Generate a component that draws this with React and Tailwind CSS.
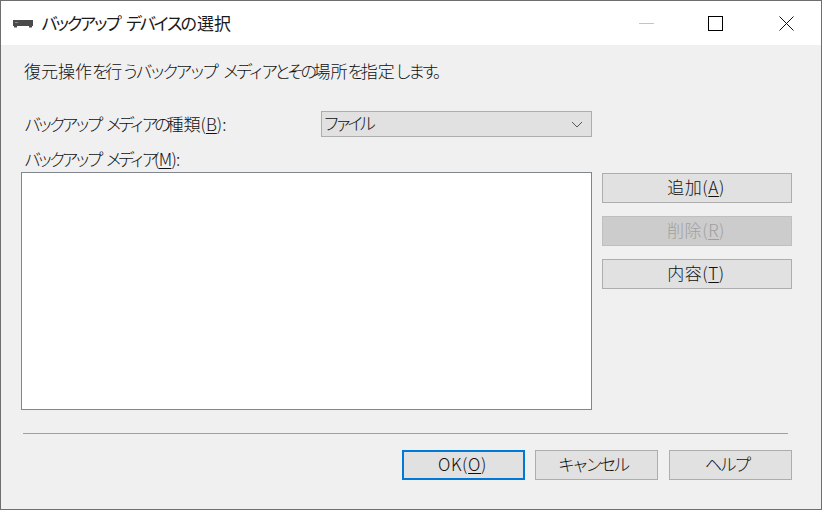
function Key({ children }) {
  return <span className="underline underline-offset-2 decoration-1">{children}</span>;
}

// katakana and hiragana are set much narrower than kanji in the dialog font
function Kana({ children, className = "tracking-[-4.5px]" }) {
  return <span className={className}>{children}</span>;
}

function Btn({ children, disabled, focus, className = "" }) {
  let look = "border-[#adadad] bg-[#e1e1e1] text-[#111]";
  if (disabled) look = "border-[#bfbfbf] bg-[#cccccc] text-[#a0a0a0]";
  if (focus) look = "border-2 border-[#0078d7] bg-[#e1e1e1] text-[#111]";
  return (
    <div className={`h-[30px] flex items-center justify-center border pb-[3px] ${look} ${className}`}>
      <span className="leading-none">{children}</span>
    </div>
  );
}

export default function App() {
  return (
    <div className="w-[822px] h-[510px] flex flex-col bg-[#f0f0f0] border border-[#6e6e6e] overflow-hidden text-[17px] font-light text-[#111] font-['Noto_Sans_CJK_JP','Noto_Sans_CJK_SC',sans-serif]">
      {/* title bar */}
      <div className="h-[44px] shrink-0 bg-white flex items-center pl-[11px]">
        <svg width="22" height="10" viewBox="0 0 22 10" className="shrink-0 mb-[-1px]">
          <path d="M1 1h20v6h-1v1.5h-3V7H5v1.5H2V7H1z" fill="#4a4a4a" />
          <rect x="3" y="3" width="3" height="1" fill="#8a8a8a" />
        </svg>
        <span className="ml-[7px] text-[#1a1a1a] font-normal whitespace-pre [word-spacing:8px]">
          <Kana className="tracking-[-4.2px]">バックアップ </Kana>
          <Kana className="tracking-[-3.2px]">デバイス</Kana>の選択
        </span>
        <div className="ml-auto flex items-center">
          <div className="w-[15px] h-px bg-[#c4c4c4] mr-[54px]" />
          <div className="w-[15px] h-[15px] border border-black mr-[56px]" />
          <svg width="15" height="15" viewBox="0 0 15 15" className="mr-[27px]">
            <path d="M0.5 0.5l14 14M14.5 0.5l-14 14" stroke="#111" strokeWidth="1" fill="none" />
          </svg>
        </div>
      </div>

      <div className="flex-1 flex flex-col pl-[20px] pr-[29px]">
        <div className="h-[22px] mt-[15px] ml-[3px] flex items-center whitespace-pre [word-spacing:7px]">
          <span>復元操作<Kana className="tracking-[-3.7px]">を</Kana>行<Kana className="tracking-[-3.7px]">うバックアップ メディアとその</Kana>場所<Kana className="tracking-[-3.7px]">を</Kana>指定<Kana className="tracking-[-3.7px]">します。</Kana></span>
        </div>

        {/* media type row */}
        <div className="flex items-center mt-[29px] h-[26px]">
          <div className="w-[300px] pl-[3px] [word-spacing:7px]">
            <Kana>バックアップ メディアの</Kana>種類(<Key>B</Key>):
          </div>
          <div className="w-[271px] h-[26px] flex items-center border border-[#adadad] bg-[#e1e1e1] pl-[1px] pr-[8px]">
            <span className="mb-[2px]"><Kana className="tracking-[-5px]">ファイル</Kana></span>
            <svg width="12" height="7" viewBox="0 0 12 7" className="ml-auto">
              <path d="M1 1l5 5 5-5" stroke="#555" strokeWidth="1" fill="none" />
            </svg>
          </div>
        </div>

        <div className="h-[22px] mt-[11px] ml-[3px] flex items-center whitespace-pre [word-spacing:7px]">
          <span><Kana>バックアップ メディア</Kana><span className="tracking-[-0.7px]">(<Key>M</Key>):</span></span>
        </div>

        {/* list and side buttons */}
        <div className="flex mt-[2px]">
          <div className="w-[571px] h-[238px] bg-white border border-[#82878f]" />
          <div className="w-[190px] ml-[10px] flex flex-col gap-[13px] mt-px tracking-[0.6px]">
            <Btn className="pr-[2px]">追加(<Key>A</Key>)</Btn>
            <Btn disabled className="pr-[2px]">削除(<Key>R</Key>)</Btn>
            <Btn className="pr-[2px]">内容(<Key>T</Key>)</Btn>
          </div>
        </div>

        <div className="h-px bg-[#a0a0a0] mt-[23px] ml-[2px] w-[765px]" />

        {/* footer */}
        <div className="flex justify-end gap-[10px] mt-[16px]">
          <Btn focus className="w-[123px] pr-[2px] tracking-[0.6px]">OK(<Key>O</Key>)</Btn>
          <Btn className="w-[123px] pr-[8px]"><Kana className="tracking-[-3.2px]">キャンセル</Kana></Btn>
          <Btn className="w-[123px] ml-px pr-[7px]"><Kana className="tracking-[-2.4px]">ヘルプ</Kana></Btn>
        </div>
      </div>
    </div>
  );
}
